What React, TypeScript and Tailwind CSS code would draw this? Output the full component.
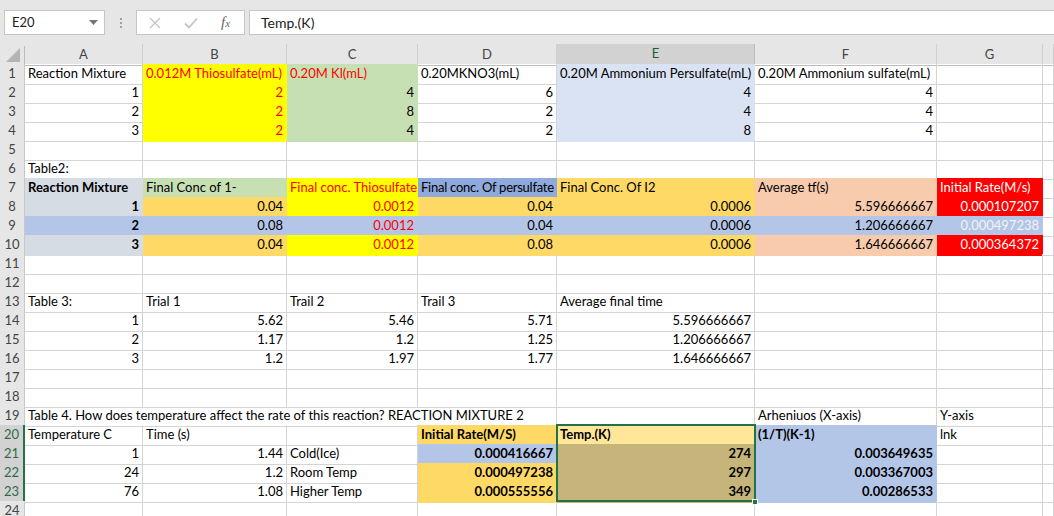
import React from "react";

type Cell = {
	t?: string;
	r?: boolean;
	b?: boolean;
	fill?: string;
	c?: string;
	span?: string;
};

const COLS =
	"grid-cols-[25px_118px_144px_131px_139px_198px_182px_106px_1fr]";

// fills (bg + matching border so the gridline disappears)
const YEL = "bg-[#ffff00] border-[#ffff00]";
const GRN = "bg-[#c6e0b4] border-[#c6e0b4]";
const LBL = "bg-[#dae3f3] border-[#dae3f3]";
const GRY = "bg-[#d6dce4] border-[#d6dce4]";
const BLU = "bg-[#b4c6e7] border-[#b4c6e7]";
const MBL = "bg-[#8ea9db] border-[#8ea9db]";
const GLD = "bg-[#ffd966] border-[#ffd966]";
const PCH = "bg-[#f8cbad] border-[#f8cbad]";
const RED = "bg-[#ff0000] border-[#ff0000]";
const LYL = "bg-[#ffe699] border-[#ffe699]";
const KHK = "bg-[#c6b57a] border-[#c6b57a]";

const R = "text-[#ff0000]";
const W = "text-white";

const n = (t: string, fill?: string, c?: string, b?: boolean): Cell => ({
	t,
	r: true,
	fill,
	c,
	b,
});
const s = (t: string, fill?: string, c?: string, b?: boolean): Cell => ({
	t,
	fill,
	c,
	b,
});
const E: Cell = {};

const rows: Cell[][] = [
	[
		s("Reaction Mixture"),
		s("0.012M Thiosulfate(mL)", YEL, R),
		s("0.20M Kl(mL)", GRN, R),
		s("0.20MKNO3(mL)"),
		s("0.20M Ammonium Persulfate(mL)", LBL),
		s("0.20M Ammonium sulfate(mL)"),
		E,
		E,
	],
	[n("1"), n("2", YEL, R), n("4", GRN), n("6"), n("4", LBL), n("4"), E, E],
	[n("2"), n("2", YEL, R), n("8", GRN), n("2"), n("4", LBL), n("4"), E, E],
	[n("3"), n("2", YEL, R), n("4", GRN), n("2"), n("8", LBL), n("4"), E, E],
	[E, E, E, E, E, E, E, E],
	[s("Table2:"), E, E, E, E, E, E, E],
	[
		s("Reaction Mixture", GRY, undefined, true),
		s("Final Conc of 1-", GRN),
		s("Final conc. Thiosulfate", YEL, R),
		s("Final conc. Of persulfate", MBL, "tracking-[-0.25px]"),
		s("Final Conc. Of I2", GLD),
		s("Average tf(s)", PCH),
		s("Initial Rate(M/s)", RED, W),
		E,
	],
	[
		n("1", GRY, undefined, true),
		n("0.04", GLD),
		n("0.0012", YEL, R),
		n("0.04", GLD),
		n("0.0006", GLD),
		n("5.596666667", PCH),
		n("0.000107207", RED, W),
		E,
	],
	[
		n("2", BLU, undefined, true),
		n("0.08", BLU),
		n("0.0012", BLU, R),
		n("0.04", BLU),
		n("0.0006", BLU),
		n("1.206666667", BLU),
		n("0.000497238", BLU, "text-[#f2f2f2]"),
		E,
	],
	[
		n("3", GRY, undefined, true),
		n("0.04", GLD),
		n("0.0012", YEL, R),
		n("0.08", GLD),
		n("0.0006", GLD),
		n("1.646666667", PCH),
		n("0.000364372", RED, W),
		E,
	],
	[E, E, E, E, E, E, E, E],
	[E, E, E, E, E, E, E, E],
	[
		s("Table 3:"),
		s("Trial 1"),
		s("Trail 2"),
		s("Trail 3"),
		s("Average final time"),
		E,
		E,
		E,
	],
	[n("1"), n("5.62"), n("5.46"), n("5.71"), n("5.596666667"), E, E, E],
	[n("2"), n("1.17"), n("1.2"), n("1.25"), n("1.206666667"), E, E, E],
	[n("3"), n("1.2"), n("1.97"), n("1.77"), n("1.646666667"), E, E, E],
	[E, E, E, E, E, E, E, E],
	[E, E, E, E, E, E, E, E],
	[
		{
			t: " Table 4. How does temperature affect the rate of this reaction? REACTION MIXTURE 2",
			span: "col-span-4",
		},
		E,
		s("Arheniuos (X-axis)"),
		s("Y-axis"),
		E,
	],
	[
		s("Temperature C"),
		s("Time (s)"),
		E,
		s("Initial Rate(M/S)", GLD, undefined, true),
		s("Temp.(K)", LYL, undefined, true),
		s("(1/T)(K-1)", BLU, undefined, true),
		s("lnk"),
		E,
	],
	[
		n("1"),
		n("1.44"),
		s("Cold(Ice)"),
		n("0.000416667", BLU, undefined, true),
		n("274", KHK, undefined, true),
		n("0.003649635", BLU, undefined, true),
		E,
		E,
	],
	[
		n("24"),
		n("1.2"),
		s("Room Temp"),
		n("0.000497238", GLD, undefined, true),
		n("297", KHK, undefined, true),
		n("0.003367003", BLU, undefined, true),
		E,
		E,
	],
	[
		n("76"),
		n("1.08"),
		s("Higher Temp"),
		n("0.000555556", GLD, undefined, true),
		n("349", KHK, undefined, true),
		n("0.00286533", BLU, undefined, true),
		E,
		E,
	],
	[E, E, E, E, E, E, E, E],
];

const selectedRows = [20, 21, 22, 23];
const letters = ["A", "B", "C", "D", "E", "F", "G", ""];

export default function App() {
	return (
		<div className="w-[1054px] h-[516px] overflow-hidden bg-white font-['Lato',sans-serif] text-[13px] text-black">
			{/* formula bar */}
			<div className="h-[44px] bg-[#e6e6e6] flex items-start pt-[10px] pl-[4px]">
				<div className="w-[101px] h-[25px] bg-white border border-[#c6c6c6] flex items-center justify-between pl-[7px] pr-[6px] text-[13px] text-[#222]">
					<span>E20</span>
					<svg width="9" height="5" viewBox="0 0 9 5">
						<path d="M0 0h9L4.5 5z" fill="#777" />
					</svg>
				</div>
				<div className="w-[31px] h-[25px] flex flex-col items-center justify-center gap-[2px]">
					<span className="w-[2px] h-[2px] bg-[#a0a0a0]" />
					<span className="w-[2px] h-[2px] bg-[#a0a0a0]" />
					<span className="w-[2px] h-[2px] bg-[#a0a0a0]" />
				</div>
				<div className="w-[109px] h-[25px] bg-white border border-[#c6c6c6] flex items-center pl-[12px] gap-[23px]">
					<svg width="12" height="12" viewBox="0 0 12 12">
						<path d="M1 1l10 10M11 1L1 11" stroke="#c4c4c4" strokeWidth="1.3" />
					</svg>
					<svg width="14" height="12" viewBox="0 0 14 12">
						<path d="M1 6.5l4 4L13 1.5" stroke="#c4c4c4" strokeWidth="1.8" fill="none" />
					</svg>
					<span className="font-['Liberation_Serif',serif] italic text-[15px] text-[#666] leading-none">
						f<span className="text-[11px]">x</span>
					</span>
				</div>
				<div className="ml-[4px] flex-1 h-[25px] bg-white border border-[#c6c6c6] border-r-0 flex items-center pl-[11px] text-[14px] text-[#222]">
					Temp.(K)
				</div>
			</div>

			{/* column headers */}
			<div className={`grid ${COLS} h-[20px] bg-[#e6e6e6] text-[#444] text-[13px]`}>
				<div className="relative border-r border-[#bcbcbc] mt-[2px]">
					<svg className="absolute left-[6px] top-[2px]" width="14" height="14" viewBox="0 0 14 14">
						<path d="M14 0V14H0z" fill="#b4b4b4" />
					</svg>
				</div>
				{letters.map((l, i) =>
					l === "E" ? (
						<div
							key={i}
							className="bg-[#d2d2d2] border-r border-b-2 border-r-[#bcbcbc] border-b-[#217346] flex items-center justify-center text-[#1d5e38]"
						>
							{l}
						</div>
					) : (
						<div
							key={i}
							className="border-r border-[#d0d0d0] flex items-center justify-center border-b border-b-[#bcbcbc]"
						>
							{l}
						</div>
					),
				)}
			</div>

			{/* cells */}
			<div className="relative">
				{rows.map((row, ri) => {
					const num = ri + 1;
					const sel = selectedRows.includes(num);
					return (
						<div key={ri} className={`grid ${COLS} h-[19px]`}>
							<div
								className={
									sel
										? "bg-[#d2d2d2] border-b border-b-[#bcbcbc] border-r-2 border-r-[#217346] text-[#2e6a47] text-[13px] flex items-center justify-center"
										: "bg-[#e6e6e6] border-b border-r border-[#c8c8c8] text-[#444] text-[13px] flex items-center justify-center"
								}
							>
								{num}
							</div>
							{row.map((c, ci) => (
								<div
									key={ci}
									className={`border-r border-b ${c.fill ?? "border-[#d4d4d4]"} ${c.span ?? ""} ${c.c ?? ""} ${c.b ? "font-bold" : ""} ${c.r ? "text-right" : "text-left"} px-[3px] pt-[1px] leading-[17px] whitespace-nowrap overflow-hidden`}
								>
									{c.t}
								</div>
							))}
						</div>
					);
				})}
				{/* selection E20:E23 */}
				<div className="absolute left-[556px] top-[360px] w-[200px] h-[78px] border-2 border-[#217346] pointer-events-none" />
				<div className="absolute left-[752px] top-[435px] w-[6px] h-[6px] bg-[#217346] border border-white" />
			</div>
		</div>
	);
}
